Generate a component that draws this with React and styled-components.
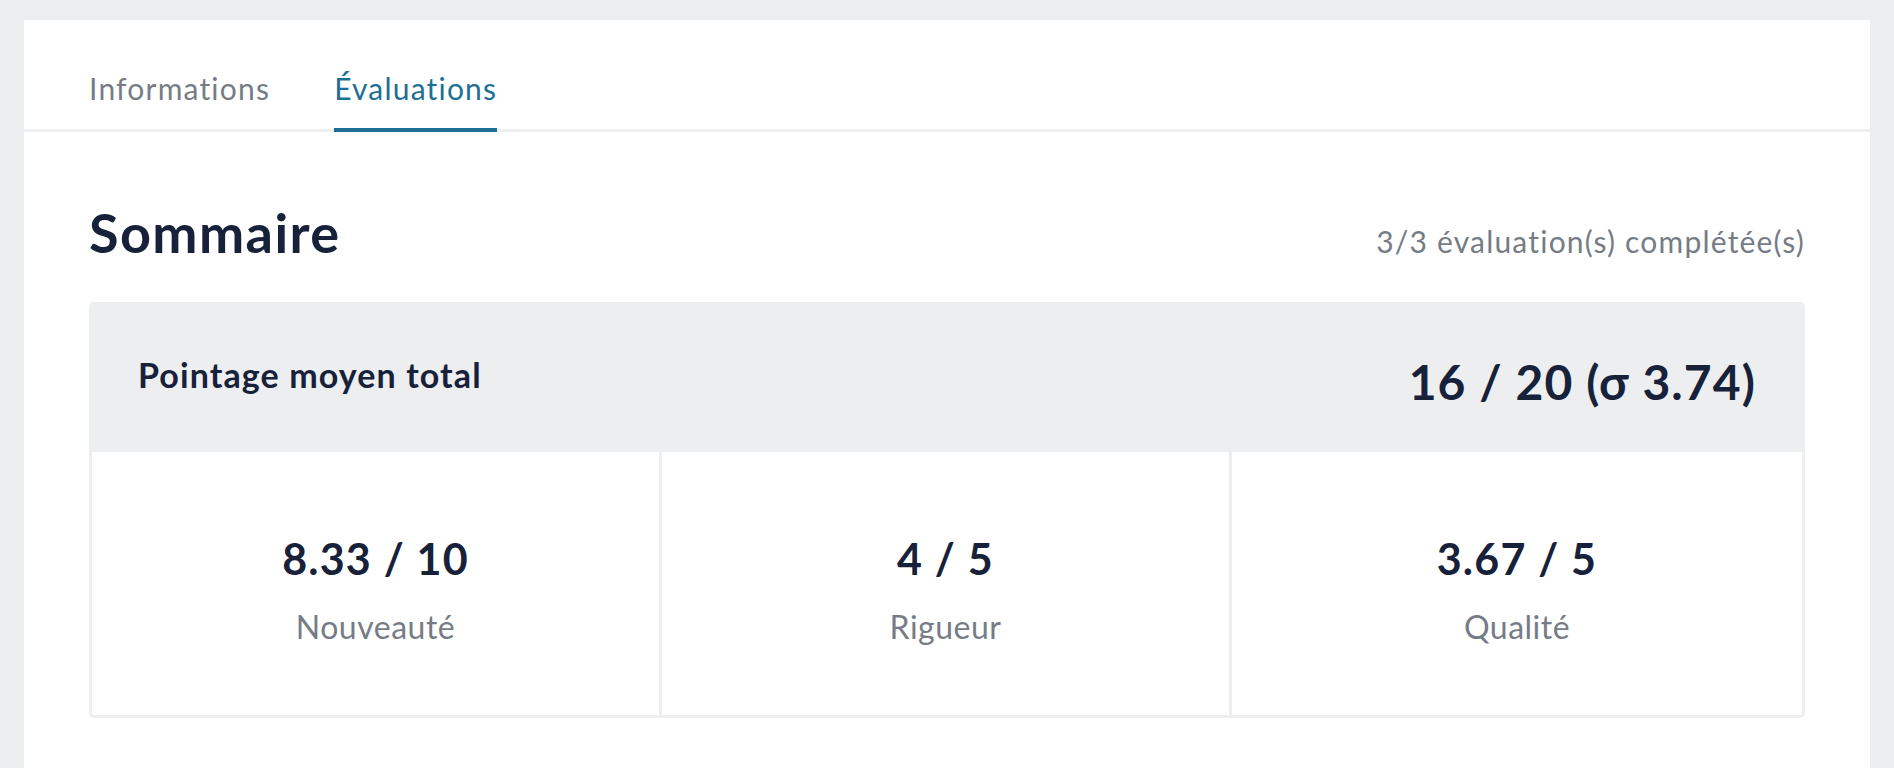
import React from 'react';
import styled, { createGlobalStyle } from 'styled-components';

/* Global */
const GlobalStyle = createGlobalStyle`
  html, body {
    margin: 0;
    padding: 0;
    background: #ebedef;
  }
  body {
    font-family: Lato, 'Open Sans', sans-serif;
    color: #17213a;
  }
`;

const Page = styled.div`
  padding: 20px 24px 0 24px;
  min-height: 100vh;
  box-sizing: border-box;
`;

const Card = styled.div`
  background: #ffffff;
  min-height: calc(100vh - 20px);
`;

/* Tabs */
const TabBar = styled.div`
  display: flex;
  gap: 64px;
  padding: 0 65px;
  border-bottom: 3px solid #eceef0;
`;

const Tab = styled.div`
  font-size: 30px;
  line-height: 40px;
  letter-spacing: 1.2px;
  padding: 48px 0 20px;
  margin-bottom: -3px;
  color: ${props => (props.active ? '#1e6f95' : '#767c86')};
  border-bottom: 4px solid ${props => (props.active ? '#1e6f95' : 'transparent')};
  cursor: pointer;
`;

/* Content */
const Content = styled.div`
  padding: 68px 65px 0 65px;
`;

const TitleRow = styled.div`
  display: flex;
  justify-content: space-between;
  align-items: baseline;
`;

const Title = styled.h1`
  margin: 0;
  font-size: 54px;
  line-height: 65px;
  font-weight: 700;
  letter-spacing: 1.4px;
  color: #17213a;
`;

const Completed = styled.span`
  font-size: 30px;
  letter-spacing: 1.2px;
  color: #767c86;
`;

const Summary = styled.div`
  margin-top: 37px;
  border: 3px solid #eceef0;
  border-radius: 5px;
  overflow: hidden;
`;

const SummaryHeader = styled.div`
  display: flex;
  justify-content: space-between;
  align-items: center;
  height: 147px;
  padding: 0 46px;
  background: #eceef0;
`;

const HeaderLabel = styled.div`
  font-size: 34px;
  font-weight: 700;
  letter-spacing: 1.1px;
  margin-bottom: 8px;
`;

const HeaderValue = styled.div`
  font-size: 48px;
  font-weight: 700;
  letter-spacing: 1.1px;
  margin-top: 6px;
`;

const Criteria = styled.div`
  display: grid;
  grid-template-columns: repeat(3, 1fr);
`;

const Criterion = styled.div`
  display: flex;
  flex-direction: column;
  align-items: center;
  padding: 81px 0 68px;
  &:not(:last-child) {
    border-right: 3px solid #eceef0;
  }
`;

const Score = styled.div`
  font-size: 43px;
  line-height: 52px;
  font-weight: 700;
  letter-spacing: 1.2px;
`;

const Label = styled.div`
  margin-top: 22px;
  font-size: 32px;
  line-height: 40px;
  letter-spacing: 0.5px;
  color: #767c86;
`;

const criteria = [
  { key: 'nouveaute', score: '8.33 / 10', label: 'Nouveauté' },
  { key: 'rigueur', score: '4 / 5', label: 'Rigueur' },
  { key: 'qualite', score: '3.67 / 5', label: 'Qualité' },
];

const App = () => (
  <Page>
    <GlobalStyle />
    <Card>
      <TabBar>
        <Tab>Informations</Tab>
        <Tab active>Évaluations</Tab>
      </TabBar>
      <Content>
        <TitleRow>
          <Title>Sommaire</Title>
          <Completed>3/3 évaluation(s) complétée(s)</Completed>
        </TitleRow>
        <Summary>
          <SummaryHeader>
            <HeaderLabel>Pointage moyen total</HeaderLabel>
            <HeaderValue>16 / 20 (σ 3.74)</HeaderValue>
          </SummaryHeader>
          <Criteria>
            {criteria.map(c => (
              <Criterion key={c.key}>
                <Score>{c.score}</Score>
                <Label>{c.label}</Label>
              </Criterion>
            ))}
          </Criteria>
        </Summary>
      </Content>
    </Card>
  </Page>
);

export default App;
